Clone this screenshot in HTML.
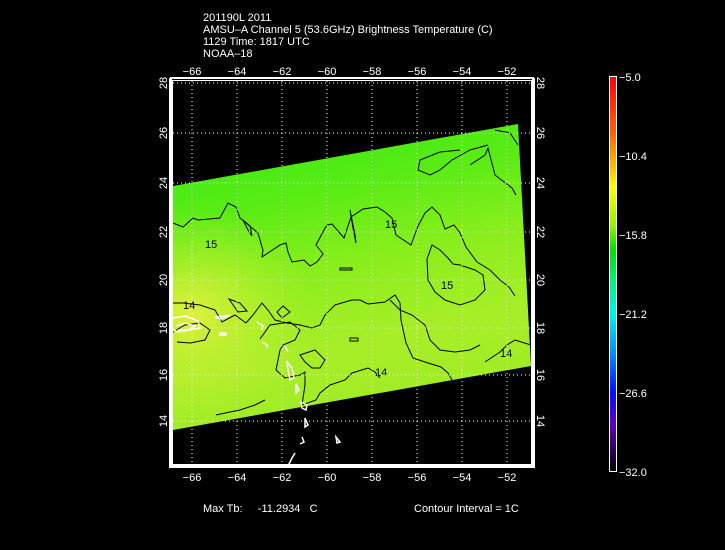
<!DOCTYPE html>
<html><head><meta charset="utf-8"><style>
html,body{margin:0;padding:0;background:#000;}
svg{display:block}
text{font-family:"Liberation Sans",sans-serif;fill:#fff;font-size:11px}
</style></head><body>
<svg width="725" height="550" viewBox="0 0 725 550" xmlns="http://www.w3.org/2000/svg">
<defs>
<linearGradient id="sw" x1="0" y1="0" x2="0.25" y2="1">
<stop offset="0" stop-color="#34e816"/>
<stop offset="0.3" stop-color="#58ec14"/>
<stop offset="0.55" stop-color="#8aee1c"/>
<stop offset="0.8" stop-color="#a8ee28"/>
<stop offset="1" stop-color="#a0ec24"/>
</linearGradient>
<radialGradient id="yl" cx="0.05" cy="0.62" r="0.35">
<stop offset="0" stop-color="#e8f040" stop-opacity="0.9"/>
<stop offset="1" stop-color="#c0f030" stop-opacity="0"/>
</radialGradient>
<linearGradient id="cb" x1="0" y1="0" x2="0" y2="1">
<stop offset="0" stop-color="#ff0000"/>
<stop offset="0.14" stop-color="#ff6000"/>
<stop offset="0.24" stop-color="#ffc800"/>
<stop offset="0.28" stop-color="#ffff00"/>
<stop offset="0.38" stop-color="#90f000"/>
<stop offset="0.44" stop-color="#00e000"/>
<stop offset="0.52" stop-color="#00f080"/>
<stop offset="0.6" stop-color="#00f0f0"/>
<stop offset="0.7" stop-color="#0090ff"/>
<stop offset="0.8" stop-color="#0010ff"/>
<stop offset="0.88" stop-color="#6000c0"/>
<stop offset="1" stop-color="#000000"/>
</linearGradient>
</defs>
<text x="203" y="21">201190L 2011</text>
<text x="203" y="33">AMSU–A Channel 5 (53.6GHz) Brightness Temperature (C)</text>
<text x="203" y="45">1129 Time: 1817 UTC</text>
<text x="203" y="57">NOAA–18</text>

<polygon points="173,186 518,124 531,366 173,430" fill="url(#sw)"/>
<polygon points="173,186 518,124 531,366 173,430" fill="url(#yl)"/>
<g fill="none" stroke="#000" stroke-width="1">
<path d="M173,223 L183,227 L193,218 L198,220 L220,218 L228,203 L236,207 L240,218 L252,228 L258,233 L262,247 L263,250 L262,257 L280,245 L286,243 L288,252 L292,262 L304,260 L310,266 L317,262 L323,254 L320,250 L316,245 L324,230 L327,225 L332,224 L344,238 L351,217 L363,209 L377,207 L385,212 L392,218 L396,235 L411,245 L418,226 L425,213 L432,207 L440,215 L445,229 L454,225 L460,233 L466,247 L477,262 L490,270 L500,280 L509,287 L515,296"/>
<path d="M173,303 L183,303 L200,305 L215,310 L222,322 L235,315 L246,323 L253,315 L262,303 L268,310 L275,320 L287,323 L300,325 L312,328 L320,325 L325,315 L335,305 L345,302 L352,300 L360,300 L368,304"/>
<path d="M368,304 L385,302 L395,295 L400,303 L401,320 L406,343 L413,358 L425,362 L441,367 L448,373 L452,380"/>
<path d="M485,362 L500,352 L507,345 L515,340 L531,345"/>
<path d="M173,332 L185,325 L200,323 L210,330 L205,340 L190,343 L177,342"/>
<path d="M260,339 L270,325 L290,322 L300,330 L295,340 L283,345 L280,350 L276,370 L285,378 L300,375 L305,372 L305,385 L302,405"/>
<path d="M300,355 L315,350 L320,355 L325,360 L320,368 L312,368 L305,362 Z"/>
<path d="M302,405 L316,400 L320,393 L330,385 L345,380 L352,373 L368,368 L375,372 L380,378"/>
<path d="M216,415 L230,412 L240,410 L255,405 L265,400"/>
<path d="M229,299 L238,312 L247,311 L240,303 Z"/>
<path d="M350,338 L358,338 L358,341 L350,341 Z"/>
<path d="M283,306 L290,312 L282,318 L277,312 Z"/>
<path d="M427,259 L432,245 L440,250 L448,258 L453,264 L460,265 L475,270 L483,275 L485,290 L475,300 L460,305 L445,300 L435,292 L428,280 Z"/>
<path d="M470,165 L485,155 L488,148 L495,175 L512,188 L516,195"/>
<path d="M488,145 L470,150 L452,160 L440,170 L430,175 L418,170 L420,160 L440,152 L460,150"/>
<path d="M495,130 L510,133 L518,145"/>
<path d="M350,210 L355,235 L356,243 L353,228 Z"/>
<path d="M390,300 L400,310 L412,315 L425,325 L430,340 L440,350 L455,352 L470,350 L480,345"/>
<path d="M243,220 L248,230 L252,236 L250,226 Z"/>
<path d="M340,268 L352,268 L352,270 L340,270 Z"/>
</g>
<g font-size="10">
<text x="205" y="248" style="fill:#000">15</text>
<text x="441" y="289" style="fill:#000">15</text>
<text x="385" y="228" style="fill:#000">15</text>
<text x="183" y="309" style="fill:#000">14</text>
<text x="375" y="376" style="fill:#000">14</text>
<text x="500" y="357" style="fill:#000">14</text>
</g>
<g fill="none" stroke="#fff" stroke-width="1.5">
<path d="M173,318 L185,316 L198,321 L200,328 L190,330 L178,332 L173,330"/>
<path d="M176,326 L185,323 L195,326 L188,330 L178,330"/>
<path d="M215,317 L225,316 L230,315 L221,319 Z"/>
<path d="M220,333 L226,333 L226,335 L220,335Z"/>
<path d="M257,322 L263,326 L262,330"/>
<path d="M262,342 L267,345 L268,348"/>
<path d="M285,346 L288,352"/>
<path d="M287,362 L292,368 L294,378 L290,380 L288,370 Z"/>
<path d="M296,384 L299,390 L296,393 Z"/>
<path d="M301,402 L307,405 L306,410 L302,408 Z"/>
<path d="M305,418 L308,425 L305,427 Z"/>
<path d="M302,437 L304,442 L300,444"/>
<path d="M295,453 L292,458 L288,466"/>
<path d="M336,437 L340,442 L337,443 Z"/>
</g>

<g stroke="#fff" stroke-width="1" stroke-dasharray="1,3">
<line x1="192" y1="81" x2="192" y2="465"/>
<line x1="237" y1="81" x2="237" y2="465"/>
<line x1="282" y1="81" x2="282" y2="465"/>
<line x1="327" y1="81" x2="327" y2="465"/>
<line x1="372" y1="81" x2="372" y2="465"/>
<line x1="417" y1="81" x2="417" y2="465"/>
<line x1="462" y1="81" x2="462" y2="465"/>
<line x1="507" y1="81" x2="507" y2="465"/>
<line x1="173" y1="83" x2="532" y2="83"/>
<line x1="173" y1="133" x2="532" y2="133"/>
<line x1="173" y1="183" x2="532" y2="183"/>
<line x1="173" y1="232" x2="532" y2="232"/>
<line x1="173" y1="280" x2="532" y2="280"/>
<line x1="173" y1="328" x2="532" y2="328"/>
<line x1="173" y1="375" x2="532" y2="375"/>
<line x1="173" y1="421" x2="532" y2="421"/>
</g>
<rect x="170.5" y="78.5" width="363" height="388" fill="none" stroke="#fff" stroke-width="1"/>
<rect x="172.5" y="80.5" width="359" height="384" fill="none" stroke="#fff" stroke-width="1"/>
<g fill="#fff">
<rect x="170" y="465" width="364" height="3"/>
<rect x="170" y="77" width="364" height="2"/>
<rect x="169" y="78" width="3" height="390"/>
<rect x="532" y="78" width="3" height="390"/>
</g>
<g text-anchor="middle">
<text x="192" y="75">−66</text><text x="237" y="75">−64</text><text x="282" y="75">−62</text><text x="327" y="75">−60</text>
<text x="372" y="75">−58</text><text x="417" y="75">−56</text><text x="462" y="75">−54</text><text x="507" y="75">−52</text>
<text x="192" y="481">−66</text><text x="237" y="481">−64</text><text x="282" y="481">−62</text><text x="327" y="481">−60</text>
<text x="372" y="481">−58</text><text x="417" y="481">−56</text><text x="462" y="481">−54</text><text x="507" y="481">−52</text>
</g>
<g text-anchor="middle">
<text transform="translate(167,83) rotate(-90)">28</text>
<text transform="translate(167,133) rotate(-90)">26</text>
<text transform="translate(167,183) rotate(-90)">24</text>
<text transform="translate(167,232) rotate(-90)">22</text>
<text transform="translate(167,280) rotate(-90)">20</text>
<text transform="translate(167,328) rotate(-90)">18</text>
<text transform="translate(167,375) rotate(-90)">16</text>
<text transform="translate(167,421) rotate(-90)">14</text>
<text transform="translate(537,83) rotate(90)">28</text>
<text transform="translate(537,133) rotate(90)">26</text>
<text transform="translate(537,183) rotate(90)">24</text>
<text transform="translate(537,232) rotate(90)">22</text>
<text transform="translate(537,280) rotate(90)">20</text>
<text transform="translate(537,328) rotate(90)">18</text>
<text transform="translate(537,375) rotate(90)">16</text>
<text transform="translate(537,421) rotate(90)">14</text>
</g>
<rect x="609.5" y="76.5" width="7" height="395" fill="url(#cb)" stroke="#fff" stroke-width="1"/>
<g>
<text x="619" y="81">−5.0</text>
<text x="619" y="160">−10.4</text>
<text x="619" y="239">−15.8</text>
<text x="619" y="318">−21.2</text>
<text x="619" y="397">−26.6</text>
<text x="619" y="476">−32.0</text>
</g>
<text x="203" y="512" xml:space="preserve">Max Tb:     -11.2934   C</text>
<text x="414" y="512">Contour Interval = 1C</text>
</svg>
</body></html>
